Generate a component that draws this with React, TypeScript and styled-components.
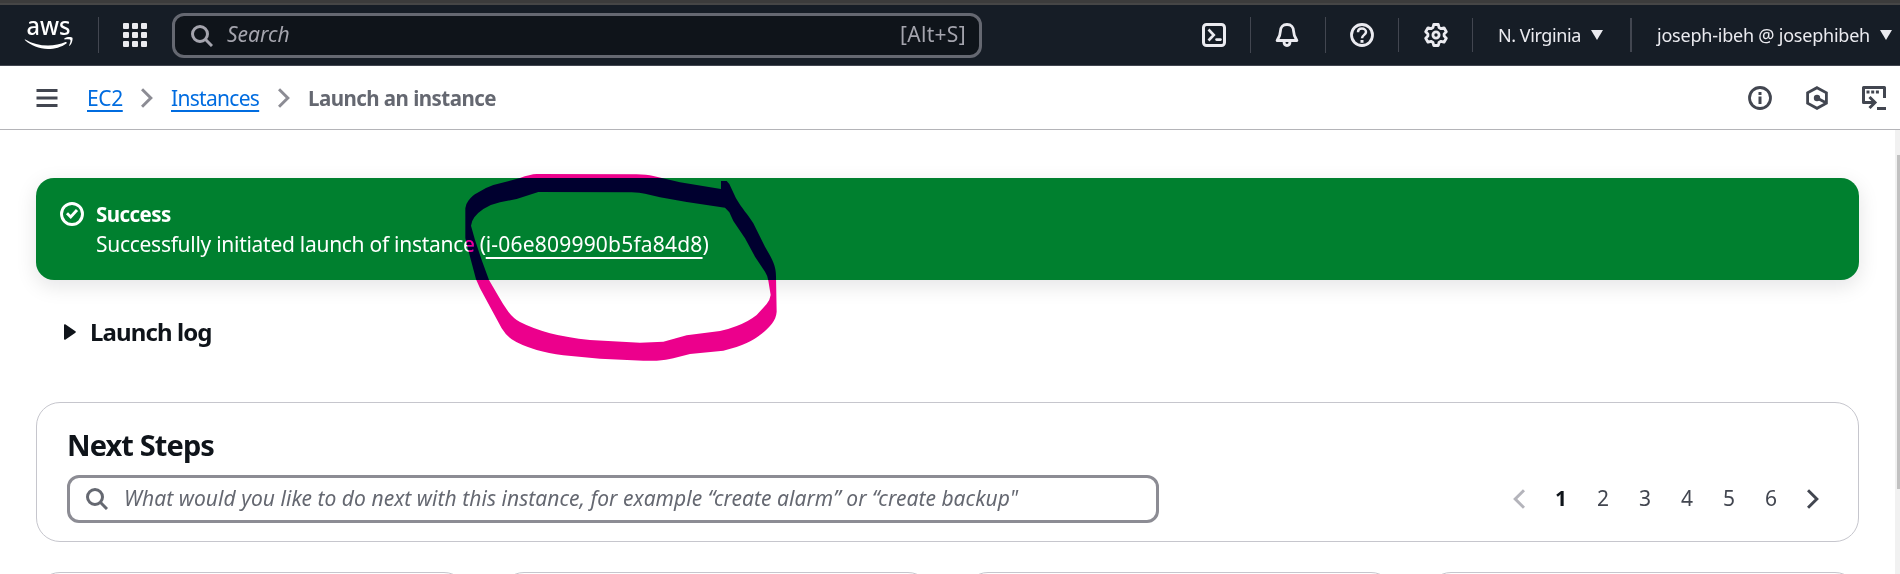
import React from "react";
import styled, { createGlobalStyle } from "styled-components";

const GlobalStyle = createGlobalStyle`
  *, *::before, *::after { box-sizing: border-box; }
  body {
    margin: 0;
    background: #fff;
    color: #0f141a;
    font-family: "Noto Sans", "Open Sans", sans-serif;
    font-size: 21px;
    line-height: 30px;
  }
  svg { display: block; flex: none; }
`;

const Page = styled.div`
  position: relative;
  display: flex;
  flex-direction: column;
  height: 574px;
  overflow: hidden;
`;

const BrowserEdge = styled.div`
  flex: none;
  height: 5px;
  background: #3c3c3c;
  border-bottom: 2px solid #464646;
`;

const TopNav = styled.header`
  flex: none;
  display: flex;
  align-items: center;
  height: 61px;
  padding: 0 8px 0 24px;
  background: #161d26;
  border-bottom: 1px solid #424650;
  color: #ebebf0;
`;

const Divider = styled.span<{ $before: number; $after: number; $w?: number; $h?: number }>`
  flex: none;
  width: ${(p) => p.$w ?? 1}px;
  height: ${(p) => p.$h ?? 36}px;
  margin: 0 ${(p) => p.$after}px 0 ${(p) => p.$before}px;
  background: #424650;
`;

const AppGrid = styled.div`
  display: grid;
  grid-template-columns: repeat(3, 6px);
  grid-auto-rows: 6px;
  gap: 3px;
  margin-right: 25px;
`;

const AppDot = styled.i`
  border-radius: 1px;
  background: #ebebf0;
`;

const GlobalSearch = styled.div`
  display: flex;
  align-items: center;
  width: 810px;
  height: 45px;
  margin-top: 1px;
  margin-right: 220px;
  padding: 0 13px 0 16px;
  border: 3px solid #656871;
  border-radius: 12px;
  background: #0f141a;
  color: #a4a4ad;
`;

const SearchHint = styled.span`
  flex: 1;
  margin-left: 14px;
  padding-bottom: 3px;
  font-style: italic;
`;

const Shortcut = styled.span`
  padding-bottom: 3px;
  letter-spacing: 0.3px;
`;

const NavMenu = styled.button<{ $spacing: number }>`
  display: flex;
  align-items: center;
  flex: none;
  padding: 0;
  border: 0;
  background: none;
  color: inherit;
  font: 18px/24px "Noto Sans", "Open Sans", sans-serif;
  letter-spacing: ${(p) => p.$spacing}px;
  white-space: nowrap;
`;

const Caret = styled.i`
  margin-left: 10px;
  border: 6px solid transparent;
  border-top: 10px solid #ebebf0;
  border-bottom: 0;
`;

const CrumbBar = styled.nav`
  flex: none;
  display: flex;
  align-items: center;
  height: 64px;
  padding: 0 14px 0 36px;
  border-bottom: 1px solid #b4b4b8;
  color: #424650;
`;

const Crumbs = styled.ol`
  flex: 1;
  display: flex;
  align-items: center;
  margin: 0 0 0 29px;
  padding: 0;
  list-style: none;
`;

const Link = styled.a<{ $tone?: string; $spacing?: string; $offset?: number }>`
  color: ${(p) => p.$tone ?? "#006ce0"};
  letter-spacing: ${(p) => p.$spacing ?? "inherit"};
  text-decoration: underline 2px;
  text-underline-offset: ${(p) => p.$offset ?? 4}px;
  text-decoration-skip-ink: none;
`;

const Crumb = styled.li<{ $w: number; $spacing: number }>`
  width: ${(p) => p.$w}px;
  letter-spacing: ${(p) => p.$spacing}px;
  white-space: nowrap;
`;

const CurrentCrumb = styled.li`
  color: #656871;
  font-weight: 700;
  font-size: 20.5px;
  letter-spacing: -0.54px;
`;

const CrumbSeparator = styled.li`
  margin: 0 18px;
  color: #8c8c94;
`;

const PanelTools = styled.div`
  display: flex;
  align-items: center;
  gap: 33px;
`;

const Body = styled.div`
  flex: 1;
  display: flex;
  min-height: 0;
`;

const Content = styled.main`
  flex: 1;
  padding: 48px 36px 0;
`;

const Alert = styled.section`
  display: flex;
  height: 102px;
  padding: 21px 24px 0;
  border-radius: 18px;
  background: #00802f;
  box-shadow: 0 6px 20px 1px rgba(0, 7, 22, 0.1);
  color: #fff;
`;

const AlertIcon = styled.div`
  padding-top: 3px;
  margin-right: 12px;
`;

const AlertTitle = styled.div`
  font-weight: 700;
  font-size: 20.5px;
  letter-spacing: -0.55px;
`;

const AlertMessage = styled.div`
  letter-spacing: -0.28px;
`;

const LaunchLog = styled.div`
  display: flex;
  align-items: center;
  gap: 14px;
  margin: 37px 0 55px 28px;
  font-size: 24px;
  font-weight: 700;
  letter-spacing: -0.9px;
`;

const NextSteps = styled.section`
  height: 140px;
  padding: 24px 30px 0;
  border: 1px solid #c6c6cd;
  border-radius: 24px;
`;

const Heading = styled.h2`
  margin: 0 0 12px;
  font-size: 29px;
  line-height: 36px;
  letter-spacing: -0.9px;
`;

const ToolRow = styled.div`
  display: flex;
  align-items: center;
  justify-content: space-between;
`;

const StepSearch = styled.div`
  display: flex;
  align-items: center;
  width: 1092px;
  height: 48px;
  padding-left: 16px;
  border: 3px solid #8c8c94;
  border-radius: 12px;
  color: #656871;
`;

const StepHint = styled.span`
  margin-left: 16px;
  padding-bottom: 2px;
  font-style: italic;
  letter-spacing: 0.04px;
`;

const Pager = styled.div`
  display: grid;
  grid-template-columns: repeat(8, 42px);
  align-items: center;
  justify-items: center;
  margin-right: -6px;
  color: #424650;
`;

const PageNumber = styled.span<{ $current?: boolean }>`
  padding-bottom: 2px;
  color: ${(p) => (p.$current ? "#0f141a" : "#424650")};
  font-weight: ${(p) => (p.$current ? 700 : 400)};
`;

const PreviousPage = styled.span`
  color: #b4b4bb;
`;

const StepCards = styled.div`
  display: grid;
  grid-template-columns: repeat(4, 1fr);
  gap: 32px;
  margin-top: 30px;
`;

const StepCard = styled.article`
  height: 180px;
  border: 1px solid #c6c6cd;
  border-radius: 24px;
`;

const ScrollTrack = styled.div`
  width: 5px;
  padding: 25px 0 0 2px;
  background: #f1f1f1;
`;

const ScrollThumb = styled.div`
  height: 334px;
  background: #c1c1c1;
`;

const MarkerStroke = styled.svg`
  position: absolute;
  left: 440px;
  top: 160px;
  mix-blend-mode: darken;
  pointer-events: none;
`;

const AwsLogo = () => (
  <svg width="50" height="60" viewBox="0 -14 50 60" fill="#fff">
    <text x="2.500" y="15.500" fontFamily="Noto Sans, sans-serif" fontSize="25.5" fontWeight="500" textLength="44" lengthAdjust="spacingAndGlyphs">aws</text>
    <path d="M1.3 20.500C8 24.500 16 26.600 24 26.600c6.500 0 12.500-1.400 17.500-3.600 1-.4 1.800.7.9 1.400C37.500 28 30.500 30 24 30 15 30 7 26.600 1.100 21.300c-.6-.6-.4-1.100.2-.8z" />
    <path d="M40 20.300c2.600-1.800 7.300-1.400 7.900-.6.6.9-.2 5.800-2.700 8-.4.300-.8.100-.6-.3.700-1.500 1.900-4.700 1.300-5.500-.6-.8-4-.7-5.600-.5-.5 0-.7-.5-.3-1.100z" transform="translate(.5 -1)" />
  </svg>
);

const SearchIcon = () => (
  <svg width="22" height="22" viewBox="0 0 22 22" fill="none" stroke="currentColor" strokeWidth="3">
    <circle cx="9" cy="9" r="7.500" />
    <path d="M14.300 14.300 21 21" />
  </svg>
);

const Chevron = ({ left = false }: { left?: boolean }) => (
  <svg width="12" height="20" viewBox="0 0 12 20" fill="none" stroke="currentColor" strokeWidth="3">
    <path d={left ? "M11 1.200 2.200 10l8.800 8.800" : "M1 1.200 9.800 10 1 18.800"} />
  </svg>
);

const TerminalIcon = () => (
  <svg width="24" height="24" viewBox="0 0 24 24" fill="none" stroke="currentColor" strokeWidth="3">
    <rect x="1.500" y="1.500" width="21" height="21" rx="3" />
    <path d="m6.500 6.500 5.300 5.500-5.300 5.500" strokeWidth="2.600" />
    <path d="M14.500 16.600h4" strokeLinecap="round" strokeWidth="2.600" />
  </svg>
);

const BellIcon = () => (
  <svg width="24" height="24" viewBox="0 0 24 24" fill="none" stroke="currentColor" strokeWidth="2.800">
    <path d="M12 1.500c-4.200 0-6.600 3-6.600 6.800 0 4.400-1.400 6.400-3.300 9.200h19.800c-1.900-2.800-3.300-4.800-3.300-9.200 0-3.800-2.400-6.800-6.600-6.800z" strokeLinejoin="round" />
    <path d="M9 18.500c0 2.500 1.200 4 3 4s3-1.500 3-4" />
  </svg>
);

const HelpIcon = () => (
  <svg width="24" height="24" viewBox="0 0 24 24" fill="none" stroke="currentColor" strokeWidth="2.800">
    <circle cx="12" cy="12" r="10.500" />
    <path d="M8 9.300c0-2.200 1.700-3.700 4-3.700s4 1.500 4 3.500c0 2.700-4 2.900-4 6.200" strokeWidth="2.500" />
    <path d="M12 17v2.800" strokeWidth="3" />
  </svg>
);

const GearIcon = () => (
  <svg width="24" height="24" viewBox="0 0 24 24" fill="none" stroke="currentColor" strokeWidth="2.800" strokeLinejoin="round">
    <path d="M9.700 1.500h4.600l.7 3 2 1.200 3-.9 2.300 4-2.200 2.100v2.200l2.200 2.100-2.300 4-3-.9-2 1.200-.7 3H9.700l-.7-3-2-1.200-3 .9-2.300-4 2.200-2.100v-2.200L1.700 8.800 4 4.800l3 .9 2-1.200z" />
    <circle cx="12" cy="12" r="3.100" />
  </svg>
);

const MenuIcon = () => (
  <svg width="22" height="18" viewBox="0 0 22 18" fill="#424650">
    <path d="M.5 0h21v3H.5zM.5 7.500h21v3H.5zM.5 15h21v3H.5z" />
  </svg>
);

const InfoIcon = () => (
  <svg width="24" height="24" viewBox="0 0 24 24" fill="none" stroke="currentColor" strokeWidth="2.800">
    <circle cx="12" cy="12" r="10.500" />
    <path d="M12 10.500V18M12 6v3" strokeWidth="3" />
  </svg>
);

const HexIcon = () => (
  <svg width="24" height="24" viewBox="0 0 24 24" fill="none" stroke="currentColor" strokeWidth="2.800">
    <path d="m12 1.700 9.400 5.100v10.400L12 22.300l-9.400-5.100V6.800z" />
    <path d="m12 12 8.500 4.600" />
    <circle cx="12" cy="12" r="3.200" fill="currentColor" stroke="none" />
  </svg>
);

const ShellIcon = () => (
  <svg width="24" height="24" viewBox="0 0 24 24" fill="none" stroke="currentColor" strokeWidth="3">
    <path d="M22.500 12V1.500h-21v15h11" strokeLinejoin="round" />
    <path d="m7.500 11 5.500 5.500-5.500 5.500M15 22.500h9" />
    <path d="M4.500 6h12.500" strokeWidth="3" strokeDasharray="3 1.700" />
  </svg>
);

const CheckIcon = () => (
  <svg width="24" height="24" viewBox="0 0 24 24" fill="none" stroke="#fff" strokeWidth="2.900">
    <circle cx="12" cy="12" r="10.500" />
    <path d="m7 11.300 3.700 3.700 6.300-7" />
  </svg>
);

const ExpandIcon = () => (
  <svg width="12" height="16" viewBox="0 0 12 16" fill="#0f141a">
    <path d="M0 1.200C0 .3.900-.1 1.600.4l9.800 6.900c.6.400.6 1 0 1.400l-9.800 6.900c-.7.500-1.600.1-1.600-.8z" />
  </svg>
);

export default function App() {
  return (
    <Page>
      <GlobalStyle />
      <BrowserEdge />
      <TopNav>
        <AwsLogo />
        <Divider $before={24} $after={24} />
        <AppGrid>
          {Array.from({ length: 9 }, (_, i) => (
            <AppDot key={i} />
          ))}
        </AppGrid>
        <GlobalSearch>
          <SearchIcon />
          <SearchHint>Search</SearchHint>
          <Shortcut>[Alt+S]</Shortcut>
        </GlobalSearch>
        <TerminalIcon />
        <Divider $before={24} $after={24} />
        <BellIcon />
        <Divider $before={26} $after={24} />
        <HelpIcon />
        <Divider $before={24} $after={25} $h={34} />
        <GearIcon />
        <Divider $before={24} $after={25} $h={34} />
        <NavMenu $spacing={-0.4}>
          N. Virginia
          <Caret />
        </NavMenu>
        <Divider $before={27} $after={25} $w={2} $h={34} />
        <NavMenu $spacing={-0.22}>
          joseph-ibeh @ josephibeh
          <Caret />
        </NavMenu>
      </TopNav>

      <CrumbBar>
        <MenuIcon />
        <Crumbs>
          <Crumb $w={36} $spacing={-0.4}>
            <Link>EC2</Link>
          </Crumb>
          <CrumbSeparator>
            <Chevron />
          </CrumbSeparator>
          <Crumb $w={89} $spacing={-0.7}>
            <Link>Instances</Link>
          </Crumb>
          <CrumbSeparator>
            <Chevron />
          </CrumbSeparator>
          <CurrentCrumb>Launch an instance</CurrentCrumb>
        </Crumbs>
        <PanelTools>
          <InfoIcon />
          <HexIcon />
          <ShellIcon />
        </PanelTools>
      </CrumbBar>

      <Body>
        <Content>
          <Alert>
            <AlertIcon>
              <CheckIcon />
            </AlertIcon>
            <div>
              <AlertTitle>Success</AlertTitle>
              <AlertMessage>
                Successfully initiated launch of instance (
                <Link $tone="#fff" $spacing="0.2px" $offset={5}>i-06e809990b5fa84d8</Link>)
              </AlertMessage>
            </div>
          </Alert>
          <LaunchLog>
            <ExpandIcon />
            Launch log
          </LaunchLog>
          <NextSteps>
            <Heading>Next Steps</Heading>
            <ToolRow>
              <StepSearch>
                <SearchIcon />
                <StepHint>
                  What would you like to do next with this instance, for example “create alarm” or “create backup"
                </StepHint>
              </StepSearch>
              <Pager>
                <PreviousPage>
                  <Chevron left />
                </PreviousPage>
                {[1, 2, 3, 4, 5, 6].map((n) => (
                  <PageNumber key={n} $current={n === 1}>
                    {n}
                  </PageNumber>
                ))}
                <Chevron />
              </Pager>
            </ToolRow>
          </NextSteps>
          <StepCards>
            <StepCard />
            <StepCard />
            <StepCard />
            <StepCard />
          </StepCards>
        </Content>
        <ScrollTrack>
          <ScrollThumb />
        </ScrollTrack>
      </Body>

      <MarkerStroke width="360" height="210" viewBox="0 0 1080 630" fill="#ec008c" fillRule="evenodd">
        <path
          d="M843 63H860L868 72L888 115C905 145 925 165 940 190L975 260L992 290C1005 315 1008 330 1008 350L1010 455C1008 485 985 505 960 525C940 541 910 558 850 572L750 582L700 595Q680 600 650 602H610L480 596L370 586Q325 580 290 570Q240 555 215 538Q197 525 185 505L150 440L120 385L108 358L90 290L76 235V145Q77 132 85 122Q100 104 110 100Q135 83 160 75L240 54Q270 43 290 42L590 43Q620 44 640 48L720 67L843 87Z
          M93 197Q95 183 103 172Q112 159 130 147Q155 132 180 127L230 117L295 96L575 97Q600 98 615 101L660 112L740 126L855 143L868 157L880 183L915 235L945 290L975 335Q983 347 985 362L992 405Q990 420 980 432L950 465Q925 485 890 498Q865 508 840 513L740 526L670 545L600 548L450 540Q380 533 330 520Q275 504 240 486Q220 475 205 455Q190 435 175 408L147 360L125 300L105 240Z"
        />
      </MarkerStroke>
    </Page>
  );
}
